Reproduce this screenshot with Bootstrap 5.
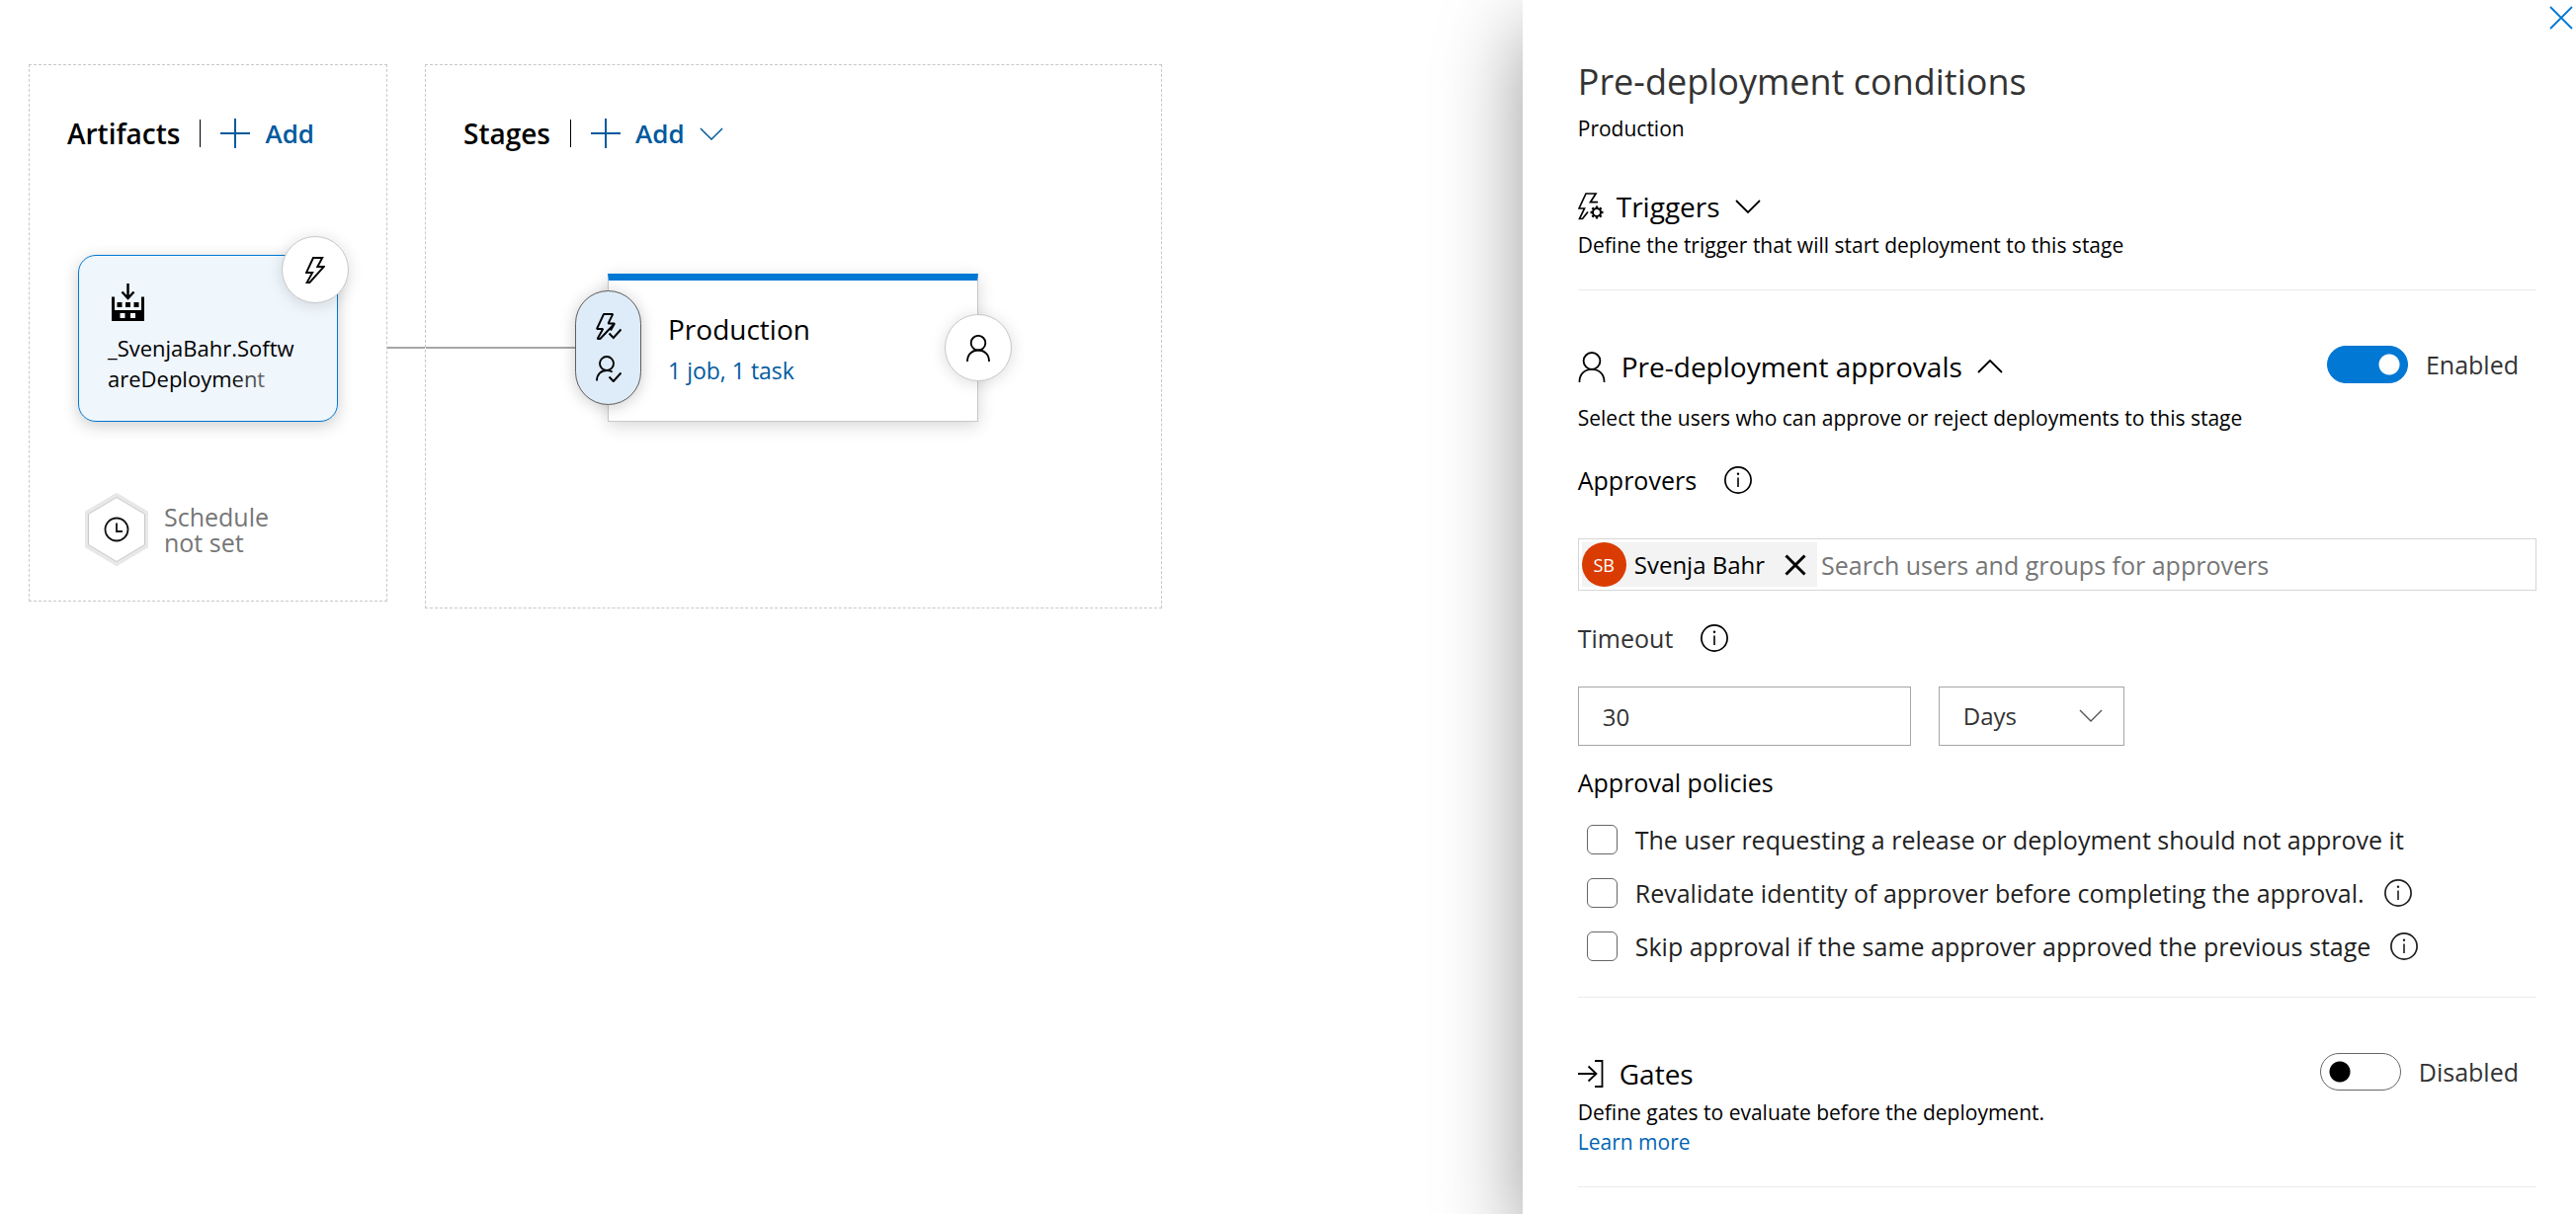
<!DOCTYPE html>
<html lang="en">
<head>
<meta charset="utf-8">
<meta name="viewport" content="width=device-width, initial-scale=1">
<title>Release pipeline - Pre-deployment conditions</title>
<link href="https://cdn.jsdelivr.net/npm/bootstrap@5.3.0/dist/css/bootstrap.min.css" rel="stylesheet">
<style>
  :root { --brand: #0078d4; --brand-dark: #005a9e; --rule: #eaeaea; --tint: #eff6fc; }
  body { font-family: "Open Sans", "Noto Sans", sans-serif; font-size: 25px; line-height: 28px; color: #000; background: #fff; overflow-x: hidden; }
  svg { display: block; flex: none; fill: none; stroke: currentColor; }
  a { text-decoration: none; }
  .plain-btn { background: none; border: 0; padding: 0; color: inherit; font: inherit; display: flex; align-items: center; }

  /* pipeline canvas */
  .canvas { padding: 65px 29px; }
  .lane { border: 1px dashed #c8c8c8; padding-top: 51px; }
  .lane-artifacts { padding-bottom: 35px; }
  .lane-stages { padding-bottom: 188px; }
  .lane-head { padding-left: 38px; line-height: 36px; font-weight: 600; }
  .lane-title { font-size: 28px; line-height: 36px; font-weight: 600; margin: 0; }
  .lane-split { width: 1px; height: 28px; background: #000; margin: 0 20px; }
  .add-btn { color: var(--brand-dark); gap: 15px; font-size: 26px; font-weight: 600; }
  .link-line { height: 2px; background: #a6a6a6; }
  .lane-gap { width: 38px; margin-top: 286px; }
  .stage-lead { width: 184px; }

  .artifact { width: 263px; height: 169px; margin: 105px 49px 72px; padding: 28px 32px 0 29px; border: 1px solid var(--brand); border-radius: 18px; background: var(--tint); box-shadow: 0 4px 16px rgba(0,0,0,.2); }
  .artifact-name { position: relative; margin-top: 12px; font-size: 22px; line-height: 31px; word-break: break-all; }
  .artifact-name::after { content: ""; position: absolute; right: 0; bottom: 0; width: 76px; height: 31px; background: linear-gradient(90deg, rgba(239,246,252,0), var(--tint)); }
  .round-btn { width: 68px; height: 68px; border-radius: 50%; border: 1px solid #c8c8c8; background: #fff; color: #000; box-shadow: 0 2px 16px rgba(0,0,0,.14); padding: 0; display: flex; align-items: center; justify-content: center; }
  .on-corner { position: absolute; top: -20px; right: -12px; }
  .on-right { position: absolute; top: 34px; right: -35px; }
  .schedule { padding-left: 55px; gap: 15px; line-height: 26px; color: #767676; }

  .stage { width: 375px; height: 150px; border: 1px solid #c8c8c8; border-top: 7px solid var(--brand); background: #fff; padding: 31px 0 0 60px; box-shadow: 0 4px 16px rgba(0,0,0,.16); }
  .stage-row { margin-top: 124px; padding-right: 185px; }
  .stage-name { font-size: 28px; line-height: 36px; margin-bottom: 9px; }
  .stage-jobs { display: block; font-size: 23px; line-height: 30px; color: var(--brand-dark); }
  .pill-btn { position: absolute; left: -34px; top: 10px; width: 67px; height: 116px; border: 1px solid #605e5c; border-radius: 34px; background: #deecf9; color: #000; box-shadow: 0 2px 16px rgba(0,0,0,.2); padding: 0; display: flex; flex-direction: column; gap: 16px; align-items: center; justify-content: center; }

  /* side panel */
  .side { width: 40.9%; min-height: 100vh; background: #fff; padding: 59px 40px 27px 56px; box-shadow: 0 30px 80px rgba(0,0,0,.4); }
  .close-btn { position: absolute; top: 6px; right: 3px; color: var(--brand); }
  .side-title { font-size: 36px; line-height: 48px; font-weight: 400; color: #333; margin: 0; }
  .note { font-size: 21px; line-height: 30px; margin: 3px 0 0; }
  .note.sub { margin-top: 8px; }
  .note.wide { margin-top: 16px; }
  .part { border-bottom: 1px solid var(--rule); padding: 56px 0 30px; }
  .part-first { padding-top: 43px; }
  .part-mid { padding-bottom: 36px; }
  .part-title { font-size: 28px; line-height: 42px; font-weight: 400; margin: 0; display: flex; align-items: center; }
  .part-title button { gap: 15px; }
  .switch-wrap { gap: 18px; color: #333; margin-right: 18px; line-height: 38px; }
  .switch-wrap .form-check-input { width: 82px; height: 38px; margin: 0; border-radius: 19px; border: 1px solid #666; background: #fff radial-gradient(circle at 19px 18px, #000 10px, transparent 11px) no-repeat 0 0 / 100% 100%; }
  .switch-wrap .form-check-input:checked { border-color: var(--brand); background: var(--brand) radial-gradient(circle at 62px 18px, #fff 10px, transparent 11px) no-repeat 0 0 / 100% 100%; }
  .field-label { gap: 28px; margin-top: 34px; }
  .field-label .muted-label { color: #333; }
  .people { margin-top: 45px; border: 1px solid #d6d6d6; height: 53px; padding: 3px; gap: 4px; }
  .chip { background: #f3f3f3; height: 45px; padding-right: 11px; font-size: 24px; }
  .avatar { width: 45px; height: 45px; border-radius: 50%; background: #da3b01; color: #fff; font-size: 18px; display: flex; align-items: center; justify-content: center; margin-right: 8px; }
  .chip-x { margin-left: 20px; }
  .people input { border: 0; outline: 0; padding: 0; flex: 1; min-width: 0; background: none; color: #333; line-height: 34px; }
  .people input::placeholder { color: #767676; opacity: 1; }
  .timeout-row { margin-top: 35px; gap: 28px; }
  .timeout-row .form-control, .timeout-row .form-select { height: 60px; border: 1px solid #a6a6a6; border-radius: 0; font-size: 24px; line-height: 34px; color: #333; padding: 0 24px; }
  .timeout-row .form-control { width: 337px; }
  .timeout-row .form-select { width: 188px; background-size: 24px 14px; background-position: right 21px center; background-image: url("data:image/svg+xml,%3Csvg xmlns='http://www.w3.org/2000/svg' viewBox='0 0 24 14'%3E%3Cpath d='M1 1l11 11L23 1' fill='none' stroke='%23555' stroke-width='1.4'/%3E%3C/svg%3E"); }
  .policies { border: 0; margin: 23px 0 0; padding: 0; }
  .policies legend { font-size: 25px; line-height: 28px; margin: 0 0 29px; float: none; }
  .policy { height: 30px; margin-bottom: 24px; padding-left: 9px; color: #1f1f1f; }
  .policy:last-child { margin-bottom: 0; }
  .policy .form-check-input { width: 31px; height: 30px; margin: 0 18px 0 0; border: 1px solid #666; border-radius: 6px; flex: none; }
  .policy .info { margin-left: 20px; }
  .learn { color: #0065b3; }
</style>
</head>
<body>
<svg width="0" height="0" class="position-absolute" aria-hidden="true">
  <symbol id="i-info" viewBox="0 0 28 28"><circle cx="14" cy="14" r="13.1" stroke-width="1.7"/><path d="M14 11.5v9.5" stroke-width="1.6"/><circle cx="14" cy="7.8" r="1.2" fill="currentColor" stroke="none"/></symbol>
  <symbol id="i-plus" viewBox="0 0 30 30"><path d="M15 0v30M0 15h30" stroke-width="2"/></symbol>
  <symbol id="i-chev" viewBox="0 0 26 14"><path d="M1 1l12 12L25 1"/></symbol>
  <symbol id="i-bolt" viewBox="0 0 20 27"><path d="M8 1 1 16h6.200L1.600 26H4.400L18.800 10h-6.500L17.200 1Z" stroke-width="1.900"/></symbol>
  <symbol id="i-person" viewBox="0 0 24 27"><circle cx="12" cy="8.200" r="7.300"/><path d="M1 27C1 20 5.500 15.500 12 15.500S23 20 23 27"/></symbol>
</svg>

<div class="d-flex">
  <main class="canvas flex-grow-1 d-flex align-items-start">
    <section class="lane lane-artifacts">
      <div class="lane-head d-flex align-items-center">
        <h2 class="lane-title">Artifacts</h2>
        <span class="lane-split"></span>
        <button type="button" class="plain-btn add-btn"><svg width="30" height="30"><use href="#i-plus"/></svg>Add</button>
      </div>
      <div class="artifact position-relative">
        <svg width="34" height="38" viewBox="0 0 34 38" class="ms-1"><path d="M16.500 0v14.500M10.500 8.500l6 6.500 6-6.500" stroke-width="2.500"/><path fill="currentColor" stroke="none" fill-rule="evenodd" d="M0 13.500h3V27h27V13.500h3V38H0ZM8.500 30v5h5v-5ZM19 30v5h5v-5Z"/><path fill="currentColor" stroke="none" d="M5.500 19h5v5h-5ZM14 19h5v5h-5ZM22.500 19h5v5h-5Z"/></svg>
        <div class="artifact-name">_SvenjaBahr.SoftwareDeployment</div>
        <button type="button" class="round-btn on-corner" aria-label="Continuous deployment trigger"><svg width="20" height="27"><use href="#i-bolt"/></svg></button>
      </div>
      <div class="schedule d-flex align-items-center">
        <svg width="66" height="74" viewBox="0 0 66 74"><path d="M33 2 63 20V54L33 72 3 54V20Z" stroke="#e8e8e8" stroke-width="4"/><path d="M33 4.500 61.500 21.500V52.500L33 69.500 4.500 52.500V21.500Z" stroke="#c8c8c8"/><g stroke="#111"><circle cx="33" cy="37" r="11.500" stroke-width="1.800"/><path d="M33 30.500V39h6" stroke-width="1.800"/></g></svg>
        <div>Schedule<br>not set</div>
      </div>
    </section>

    <div class="link-line lane-gap"></div>

    <section class="lane lane-stages">
      <div class="lane-head d-flex align-items-center">
        <h2 class="lane-title">Stages</h2>
        <span class="lane-split"></span>
        <button type="button" class="plain-btn add-btn"><svg width="30" height="30"><use href="#i-plus"/></svg>Add<svg width="24" height="13" viewBox="0 0 26 14" stroke-width="1.600"><use href="#i-chev"/></svg></button>
      </div>
      <div class="stage-row d-flex align-items-center">
        <div class="link-line stage-lead"></div>
        <div class="stage position-relative">
          <div class="stage-name">Production</div>
          <a href="#" class="stage-jobs">1 job, 1 task</a>
          <button type="button" class="pill-btn" aria-label="Pre-deployment conditions">
            <svg width="26" height="27" viewBox="0 0 26 27"><path d="M15 17.500 19 10.500h-6.500L17.200 1H8L1 16h6.200L1.600 26H4.400L19 10.500" stroke-width="1.900" stroke-linejoin="bevel"/><path d="M13.500 20.500l4.300 4.500 7.700-8.500" stroke-width="2"/></svg>
            <svg width="26" height="27" viewBox="0 0 26 27" stroke-width="1.900"><circle cx="11" cy="8" r="7"/><path d="M1 25.500C1 19 5 15 11 15c2.200 0 4.200.500 5.700 1.500"/><path d="M13.500 21.500l4.300 4.500 7.700-8.500" stroke-width="2"/></svg>
          </button>
          <button type="button" class="round-btn on-right" aria-label="Post-deployment conditions"><svg width="24" height="27" stroke-width="1.900"><use href="#i-person"/></svg></button>
        </div>
      </div>
    </section>
  </main>

  <aside class="side position-relative flex-shrink-0">
    <button type="button" class="plain-btn close-btn" aria-label="Close"><svg width="24" height="24" viewBox="0 0 24 24" stroke-width="1.800"><path d="M1 1l22 22M23 1 1 23"/></svg></button>
    <h1 class="side-title">Pre-deployment conditions</h1>
    <p class="note sub">Production</p>

    <section class="part part-first">
      <h2 class="part-title">
        <svg width="27" height="28" viewBox="0 0 27 28" stroke-width="1.700"><path d="M20 9.700h-7.500L18 1H8L1 16h5.500L1.500 26.500H4.500l5.500-7"/><circle cx="19" cy="20" r="4" stroke-width="2"/><path stroke-width="2.300" d="M19 13.500v3M19 23.500v3M12.500 20h3M22.500 20h3M14.400 15.400l2.100 2.100M21.500 22.500l2.100 2.100M23.600 15.400l-2.100 2.100M16.500 22.500l-2.100 2.100"/></svg>
        <button type="button" class="plain-btn ms-2 ps-1">Triggers<svg width="26" height="14" stroke-width="1.800"><use href="#i-chev"/></svg></button>
      </h2>
      <p class="note">Define the trigger that will start deployment to this stage</p>
    </section>

    <section class="part part-mid">
      <div class="d-flex align-items-start justify-content-between">
        <h2 class="part-title">
          <svg width="28" height="31" viewBox="0 0 24 27" stroke-width="1.600"><use href="#i-person"/></svg>
          <button type="button" class="plain-btn ms-3">Pre-deployment approvals<svg width="26" height="14" viewBox="0 0 26 14" stroke-width="1.800"><path d="M1 13 13 1l12 12"/></svg></button>
        </h2>
        <div class="switch-wrap d-flex align-items-center">
          <input class="form-check-input" type="checkbox" role="switch" id="sw-approvals" checked>
          <label for="sw-approvals">Enabled</label>
        </div>
      </div>
      <p class="note wide">Select the users who can approve or reject deployments to this stage</p>

      <div class="field-label d-flex align-items-center">
        <label for="approvers">Approvers</label>
        <svg width="28" height="28"><use href="#i-info"/></svg>
      </div>
      <div class="people d-flex align-items-center">
        <div class="chip d-flex align-items-center">
          <span class="avatar">SB</span>Svenja Bahr
          <button type="button" class="plain-btn chip-x" aria-label="Remove Svenja Bahr"><svg width="22" height="22" viewBox="0 0 22 22" stroke-width="3"><path d="M1.500 1.500l19 19M20.500 1.500l-19 19"/></svg></button>
        </div>
        <input id="approvers" type="text" placeholder="Search users and groups for approvers">
      </div>

      <div class="field-label d-flex align-items-center">
        <label for="timeout" class="muted-label">Timeout</label>
        <svg width="28" height="28"><use href="#i-info"/></svg>
      </div>
      <div class="timeout-row d-flex">
        <input id="timeout" type="text" class="form-control" value="30">
        <select class="form-select" aria-label="Timeout unit"><option>Days</option><option>Hours</option><option>Minutes</option></select>
      </div>

      <fieldset class="policies">
        <legend>Approval policies</legend>
        <div class="policy d-flex align-items-center">
          <input class="form-check-input" type="checkbox" id="p1"><label for="p1">The user requesting a release or deployment should not approve it</label>
        </div>
        <div class="policy d-flex align-items-center">
          <input class="form-check-input" type="checkbox" id="p2"><label for="p2">Revalidate identity of approver before completing the approval.</label>
          <svg class="info" width="28" height="28"><use href="#i-info"/></svg>
        </div>
        <div class="policy d-flex align-items-center">
          <input class="form-check-input" type="checkbox" id="p3"><label for="p3">Skip approval if the same approver approved the previous stage</label>
          <svg class="info" width="28" height="28"><use href="#i-info"/></svg>
        </div>
      </fieldset>
    </section>

    <section class="part">
      <div class="d-flex align-items-start justify-content-between">
        <h2 class="part-title">
          <svg width="26" height="28" viewBox="0 0 26 28" stroke-width="1.800"><path d="M0 14h19M10.500 6.500 18.500 14l-8 7.500M17 1h7.500v26H17"/></svg>
          <span class="ms-3">Gates</span>
        </h2>
        <div class="switch-wrap d-flex align-items-center">
          <input class="form-check-input" type="checkbox" role="switch" id="sw-gates">
          <label for="sw-gates">Disabled</label>
        </div>
      </div>
      <p class="note">Define gates to evaluate before the deployment.<br><a href="#" class="learn">Learn more</a></p>
    </section>
  </aside>
</div>
<script src="https://cdn.jsdelivr.net/npm/bootstrap@5.3.0/dist/js/bootstrap.bundle.min.js"></script>
</body>
</html>
